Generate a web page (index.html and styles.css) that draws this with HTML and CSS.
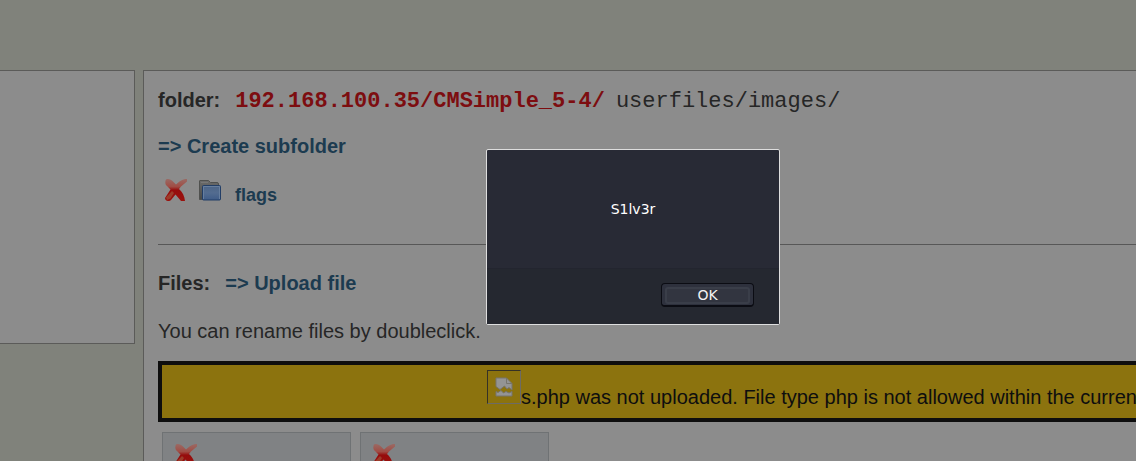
FILE: index.html
```html
<!DOCTYPE html>
<html lang="en">
<head>
<meta charset="utf-8">
<title>Images</title>
<link rel="stylesheet" href="styles.css">
</head>
<body>
<svg class="defs" aria-hidden="true">
  <defs>
    <linearGradient id="red" x1="0.5" y1="0" x2="0.5" y2="1">
      <stop offset="0" stop-color="#9a6a64"/>
      <stop offset="0.35" stop-color="#a04c44"/>
      <stop offset="0.5" stop-color="#960c0c"/>
      <stop offset="1" stop-color="#9a120e"/>
    </linearGradient>
    <linearGradient id="blue" x1="0" y1="0" x2="0" y2="1">
      <stop offset="0" stop-color="#4c6486"/>
      <stop offset="0.5" stop-color="#536c90"/>
      <stop offset="1" stop-color="#3f5c88"/>
    </linearGradient>
    <linearGradient id="gray" x1="0" y1="0" x2="0" y2="1">
      <stop offset="0" stop-color="#6c6c6b"/>
      <stop offset="1" stop-color="#484947"/>
    </linearGradient>
    <symbol id="cross" viewBox="0 0 22 22">
      <path fill="url(#red)" d="M1 0.500C3.500-0.500 6 0.500 8 2.500L11 5.500C14 2.500 17 0 22 0V2.500L16 7.500L14 10C17.500 13 19.500 17 20 22H16L10.500 15.500L6 21C4 23 0 22 0 19L5.500 10.500L1.500 6.500C0 5 0 2 1 0.500Z"/>
      <path fill="#9c3c2a" d="M1 18.500L7 12L9 14L5.500 19.500L2 21Z"/>
    </symbol>
  </defs>
</svg>
<div class="page">
  <aside class="tree"></aside>
  <main class="content">
    <p class="path"><b class="label">folder:</b><b class="host">192.168.100.35/CMSimple_5-4/</b><span class="dir">userfiles/images/</span></p>
    <p class="create"><a href="#create">=&gt; Create subfolder</a></p>
    <div class="folder">
      <button class="delete" type="button" aria-label="Delete folder"><svg class="icon"><use href="#cross"/></svg></button>
      <svg class="icon" viewBox="0 0 22 22" aria-hidden="true">
        <path fill="url(#gray)" stroke="#50514f" d="M.5 20.500V2Q.5 1.500 1 1.500H9.500L11.500 3.500H18Q19.500 3.500 19.500 5V20.500Z"/>
        <path fill="none" stroke="#777" d="M2 3.500H9"/>
        <rect x="3.500" y="6.500" width="18" height="14.500" rx="1" fill="url(#blue)" stroke="#233e66"/>
        <path fill="none" stroke="#667e9e" d="M4.500 20V7.500H20.500V20"/>
      </svg>
      <a class="name" href="#flags">flags</a>
    </div>
    <hr>
    <p class="files"><b class="label">Files:</b><a href="#upload">=&gt; Upload file</a></p>
    <p class="hint">You can rename files by doubleclick.</p>
    <div class="warning">
      <span class="broken"><svg width="18" height="20" viewBox="0 0 18 20" aria-hidden="true">
        <path fill="#949494" stroke="#77756c" d="M1 1H11.500L17 6.500V13L14 10.500L12 12L9.500 9L5 12.500L1 9.500Z"/>
        <path fill="none" stroke="#77756c" d="M11.500 1V6.500H17"/>
        <path fill="#949494" stroke="#77756c" d="M1 19V14.500L3 15.500L6 13.500L8.500 16L11 14.500L14 16L17 14.500V19Z"/>
      </svg></span>
      <span>s.php was not uploaded. File type php is not allowed within the current folder.</span>
    </div>
    <div class="tiles">
      <div class="tile"><button class="delete" type="button" aria-label="Delete file 1"><svg class="icon"><use href="#cross"/></svg></button></div>
      <div class="tile"><button class="delete" type="button" aria-label="Delete file 2"><svg class="icon"><use href="#cross"/></svg></button></div>
    </div>
  </main>
</div>
<div class="dialog" role="alertdialog" aria-modal="true" aria-labelledby="message">
  <div class="message" id="message">S1lv3r</div>
  <div class="actions"><button class="ok" type="button"><span>OK</span></button></div>
</div>
</body>
</html>
```
FILE: styles.css
```css
* { box-sizing: border-box; }
html, body { height: 100%; }
body {
  margin: 0;
  overflow: hidden;
  background: #80827b;
  color: #262626;
  font: 20px/24px "Liberation Sans", Arial, sans-serif;
}
p { margin: 0; white-space: nowrap; }
a { color: #1c3b50; font-weight: bold; text-decoration: none; }
button { margin: 0; padding: 0; border: 0; background: none; }
.defs { position: absolute; width: 0; height: 0; }
.page {
  display: flex;
  align-items: flex-start;
  gap: 8px;
  height: 100%;
  padding-top: 70px;
}
.tree {
  flex: 0 0 135px;
  height: 274px;
  background: #8c8c8c;
  border: 1px solid #5b5b59;
  border-left: 0;
}
.content {
  flex: 1;
  min-width: 0;
  min-height: 100%;
  padding: 17px 0 0 14px;
  background: #8c8c8c;
  border: solid #5b5b59;
  border-width: 1px 0 0 1px;
}
.path { display: flex; align-items: baseline; }
.path .label, .files .label { margin-right: 15px; }
.host, .dir { font-family: "Liberation Mono", "Courier New", monospace; font-size: 22px; }
.host { margin-right: 11px; color: #7d0d10; }
.create { margin-top: 20px; }
.folder { display: flex; align-items: center; gap: 12px; margin-top: 15px; padding-left: 7px; }
.folder .name { padding: 10px 0 0 2px; font-size: 18px; }
.icon { display: block; width: 22px; height: 22px; }
hr { margin: 37px 0 0; border: 0; border-top: 1px solid #575757; }
.files { margin-top: 26px; }
.hint { margin-top: 24px; }
.warning {
  display: flex;
  align-items: flex-start;
  height: 61px;
  margin-top: 18px;
  padding: 5px 0 0 325px;
  overflow: hidden;
  border: 4px solid #0e0e0e;
  border-right: 0;
  background: #8c730e;
  color: #0e0e0e;
  line-height: 54px;
  white-space: nowrap;
}
.broken {
  display: grid;
  flex: none;
  place-items: center;
  width: 34px;
  height: 34px;
  border: 1px solid;
  border-color: #353126 #6d6b65 #6d6b65 #353126;
}
.tiles { display: flex; gap: 9px; padding: 10px 0 0 4px; }
.tile {
  width: 189px;
  height: 60px;
  padding: 11px 12px;
  border: 1px solid #6f7274;
  background: #808284;
}
.dialog {
  position: absolute;
  top: 149px;
  left: 486px;
  width: 294px;
  border: 1px solid #dedede;
  border-radius: 2px;
  background: #282a35;
  color: #fff;
  font: 14px/16px "DejaVu Sans", sans-serif;
}
.message { padding: 51px 0; text-align: center; }
.actions {
  display: flex;
  justify-content: flex-end;
  padding: 14px 25px 17px;
  background: #252830;
  border-top: 1px solid #23252f;
}
.ok {
  width: 93px;
  height: 24px;
  padding: 3px;
  border: 1px solid #0b0c13;
  border-bottom-width: 2px;
  border-radius: 4px;
  background: #2e313d;
  color: #f2f2f2;
  font: inherit;
}
.ok span { display: block; border: 2px solid #3a3e49; border-radius: 3px; background: #323540; line-height: 13px; }
```
